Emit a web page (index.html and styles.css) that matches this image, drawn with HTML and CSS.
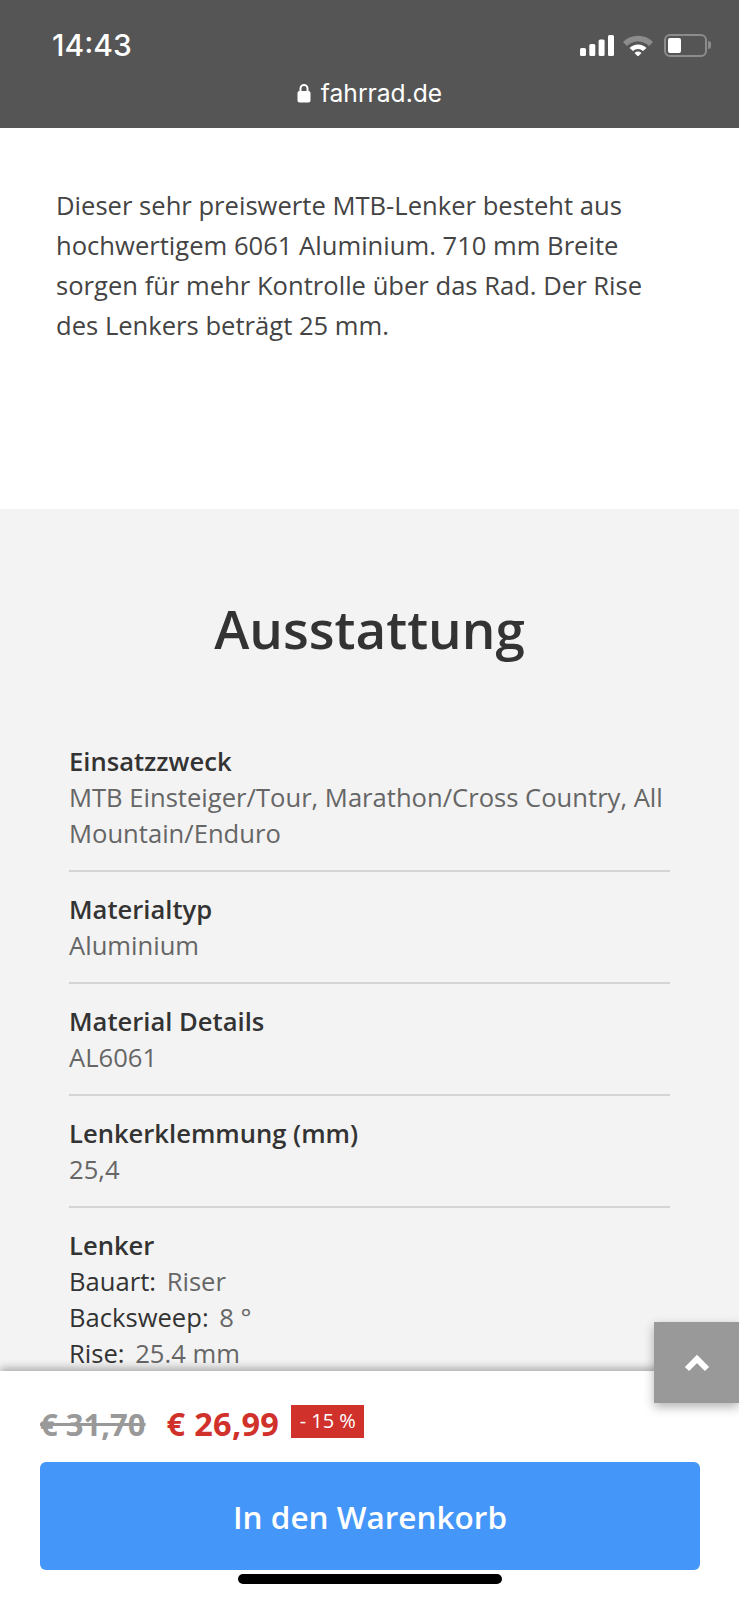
FILE: index.html
```html
<!DOCTYPE html>
<html lang="de">
<head>
    <meta charset="UTF-8">
    <meta name="viewport" content="width=device-width, initial-scale=1.0">
    <title>fahrrad.de</title>
    <link rel="stylesheet" href="styles.css">
</head>
<body>
    <div class="status-bar">
        <div class="status-row">
            <span class="clock">14:43</span>
            <div class="status-icons">
                <svg class="signal" width="34" height="21" viewBox="0 0 34 21">
                    <rect x="0" y="13" width="6" height="8" rx="1.500" fill="#fff"/>
                    <rect x="9.300" y="9" width="6" height="12" rx="1.500" fill="#fff"/>
                    <rect x="18.600" y="4.500" width="6" height="16.500" rx="1.500" fill="#fff"/>
                    <rect x="28" y="0" width="6" height="21" rx="1.500" fill="#fff"/>
                </svg>
                <svg class="wifi" width="30" height="22" viewBox="0 0 30 22">
                    <path d="M0 8 A21 21 0 0 1 30 8 L26 12 A15.500 15.500 0 0 0 4 12 Z" fill="#8c8c8c"/>
                    <path d="M6.500 14 A12 12 0 0 1 23.500 14 L20 17 A7.500 7.500 0 0 0 10 17 Z" fill="#fff"/>
                    <path d="M11.500 19 A5 5 0 0 1 18.500 19 L15 22.500 Z" fill="#fff"/>
                </svg>
                <div class="battery"><div class="battery-level"></div></div>
                <div class="battery-tip"></div>
            </div>
        </div>
        <div class="url-row">
            <svg width="14" height="20" viewBox="0 0 14 20">
                <path d="M3.500 9 V5.500 A3.500 3.500 0 0 1 10.500 5.500 V9" fill="none" stroke="#fff" stroke-width="2"/>
                <rect x="0.500" y="8" width="13" height="11.500" rx="2" fill="#fff"/>
            </svg>
            <span>fahrrad.de</span>
        </div>
    </div>

    <div class="intro">
        <p>Dieser sehr preiswerte MTB-Lenker besteht aus hochwertigem 6061 Aluminium. 710 mm Breite sorgen für mehr Kontrolle über das Rad. Der Rise des Lenkers beträgt 25 mm.</p>
    </div>

    <div class="specs">
        <h2>Ausstattung</h2>
        <div class="spec">
            <div class="spec-title">Einsatzzweck</div>
            <div class="spec-value">MTB Einsteiger/Tour, Marathon/Cross Country, All Mountain/Enduro</div>
        </div>
        <div class="spec">
            <div class="spec-title">Materialtyp</div>
            <div class="spec-value">Aluminium</div>
        </div>
        <div class="spec">
            <div class="spec-title">Material Details</div>
            <div class="spec-value">AL6061</div>
        </div>
        <div class="spec">
            <div class="spec-title">Lenkerklemmung (mm)</div>
            <div class="spec-value">25,4</div>
        </div>
        <div class="spec">
            <div class="spec-title">Lenker</div>
            <div class="spec-value"><span class="key">Bauart:</span> Riser</div>
            <div class="spec-value"><span class="key">Backsweep:</span> 8 °</div>
            <div class="spec-value"><span class="key">Rise:</span> 25.4 mm</div>
        </div>
    </div>

    <div class="to-top">
        <svg width="26" height="18" viewBox="0 0 26 18">
            <path d="M3 15 L13 5 L23 15" fill="none" stroke="#fff" stroke-width="6"/>
        </svg>
    </div>

    <div class="buy-bar">
        <div class="prices">
            <span class="old-price">€ 31,70</span>
            <span class="new-price">€ 26,99</span>
            <span class="discount">- 15 %</span>
        </div>
        <button class="cart-button">In den Warenkorb</button>
        <div class="home-bar"></div>
    </div>
</body>
</html>
```

FILE: styles.css
```css
html, body {
    height: 1600px;
    overflow: hidden;
}
body {
    margin: 0;
    position: relative;
    font-family: 'Open Sans', sans-serif;
    background-color: #fff;
    color: #333;
}
.status-bar {
    height: 128px;
    box-sizing: border-box;
    padding: 25px 28px 0 52px;
    background-color: #555;
    color: #fff;
    font-family: 'Inter', sans-serif;
}
.status-row {
    display: flex;
    justify-content: space-between;
    align-items: center;
    height: 40px;
}
.clock {
    font-size: 30px;
    font-weight: 500;
}
.status-icons {
    display: flex;
    align-items: center;
}
.wifi {
    margin-left: 9px;
}
.battery {
    width: 43px;
    height: 23px;
    margin-left: 11px;
    padding: 2px;
    box-sizing: border-box;
    border: 2px solid #8c8c8c;
    border-radius: 6px;
}
.battery-level {
    width: 13px;
    height: 100%;
    background-color: #fff;
    border-radius: 2px;
}
.battery-tip {
    width: 3px;
    height: 8px;
    margin-left: 1px;
    background-color: #8c8c8c;
    border-radius: 0 3px 3px 0;
}
.url-row {
    display: flex;
    justify-content: center;
    align-items: center;
    gap: 10px;
    margin-top: 13px;
    margin-left: -24px;
    font-size: 24.6px;
    font-weight: 400;
}
.intro {
    height: 381px;
    box-sizing: border-box;
    padding: 58px 56px 0;
    font-size: 25.6px;
    line-height: 40px;
    color: #444;
}
.intro p {
    margin: 0;
}
.specs {
    height: 1091px;
    box-sizing: border-box;
    padding: 78px 69px 0;
    background-color: #f3f3f3;
}
.specs h2 {
    margin: 0 0 73px;
    font-size: 53px;
    line-height: 84px;
    font-weight: 650;
    text-align: center;
    color: #333;
}
.spec {
    padding-bottom: 18px;
    margin-bottom: 20px;
    border-bottom: 2px solid #d4d4d4;
    font-size: 25.6px;
    line-height: 36px;
}
.spec:last-child {
    border-bottom: none;
}
.spec-title {
    font-weight: 600;
    color: #333;
}
.spec-value {
    color: #666;
}
.key {
    color: #333;
    margin-right: 4px;
}
.to-top {
    position: absolute;
    top: 1322px;
    right: 0;
    width: 85px;
    height: 81px;
    z-index: 2;
    display: flex;
    justify-content: center;
    align-items: center;
    background-color: #999;
    box-shadow: 0 4px 10px rgba(0, 0, 0, 0.3);
}
.buy-bar {
    position: absolute;
    left: 0;
    right: 0;
    top: 1371px;
    height: 229px;
    box-sizing: border-box;
    padding: 34px 39px 0 40px;
    background-color: #fff;
    box-shadow: 0 -3px 8px rgba(0, 0, 0, 0.3);
}
.prices {
    display: flex;
    align-items: flex-start;
    height: 33px;
    margin-bottom: 24px;
}
.old-price {
    font-size: 31px;
    line-height: 38px;
    font-weight: 700;
    color: #999;
    text-decoration: line-through;
    margin-right: 21px;
}
.new-price {
    font-size: 32.5px;
    line-height: 38px;
    font-weight: 700;
    color: #d0312a;
    letter-spacing: 0.3px;
    margin-right: 12px;
}
.discount {
    width: 73px;
    height: 33px;
    line-height: 31px;
    text-align: center;
    font-size: 20px;
    color: #fff;
    background-color: #d0312a;
}
.cart-button {
    display: block;
    width: 660px;
    height: 108px;
    padding: 0;
    border: none;
    border-radius: 6px;
    background-color: #4496f8;
    color: #fff;
    font-family: 'Open Sans', sans-serif;
    font-size: 31.5px;
    font-weight: 600;
}
.home-bar {
    position: absolute;
    left: 238px;
    top: 203px;
    width: 264px;
    height: 10px;
    border-radius: 5px;
    background-color: #000;
}
```
